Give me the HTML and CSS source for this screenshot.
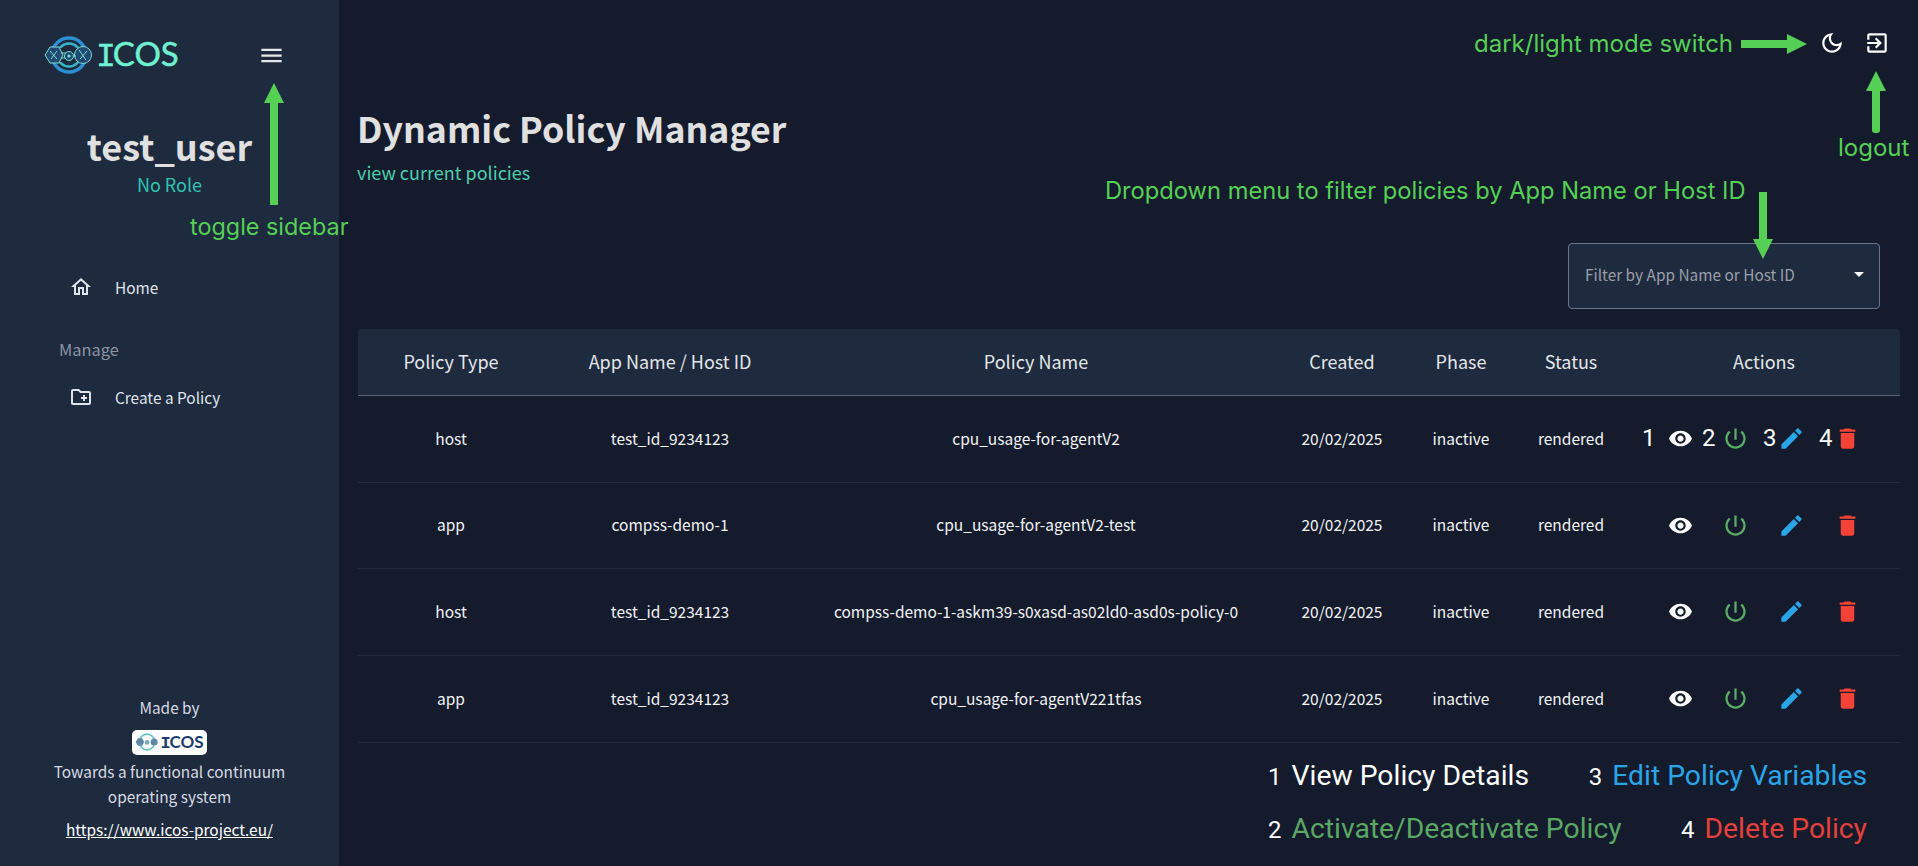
FILE: index.html
```html
<!DOCTYPE html>
<html lang="en">
<head>
<meta charset="utf-8">
<title>Dynamic Policy Manager</title>
<link rel="stylesheet" href="styles.css">
</head>
<body>
<div class="app">
  <aside class="sidebar">
    <div class="brand-row">
      <div class="brand">
        <svg class="brand-mark" viewBox="0 0 50 38" aria-hidden="true">
          <circle cx="25" cy="19" r="17" fill="none" stroke="#2b8fd0" stroke-width="3.5"/>
          <circle cx="25" cy="19" r="11.5" fill="none" stroke="#35b6c9" stroke-width="2.5"/>
          <rect x="3" y="12" width="44" height="14" rx="6" fill="#1e2a3e"/>
          <polygon points="1,19 6,11 15,11 19,19 15,27 6,27" fill="#1f4a72" stroke="#7fdcd5" stroke-width="1"/>
          <circle cx="25" cy="20" r="4.5" fill="#1f4a72" stroke="#7fdcd5" stroke-width="1"/>
          <circle cx="39" cy="19" r="8.5" fill="#1f4a72" stroke="#7fdcd5" stroke-width="1"/>
          <path d="M17 17h5M17 22h4M29 20h3M6 15l7 8M13 15l-6 8M35 14l7 10M43 15l-7 8" stroke="#7fdcd5" stroke-width="1" fill="none"/>
          <circle cx="25" cy="20" r="1.6" fill="#7fdcd5"/>
        </svg>
        <span class="brand-name"><span class="brand-i">I</span>COS</span>
      </div>
      <svg class="menu-icon" viewBox="0 0 24 24" aria-hidden="true"><path d="M3 18h18v-2H3v2zm0-5h18v-2H3v2zm0-7v2h18V6H3z"/></svg>
    </div>
    <div class="profile">
      <h2 class="profile-name">test_user</h2>
      <div class="profile-role">No Role</div>
    </div>
    <nav class="nav">
      <a class="nav-item">
        <svg class="nav-icon" viewBox="0 0 24 24" aria-hidden="true"><path d="M12 5.69l5 4.5V18h-2v-6H9v6H7v-7.81l5-4.5M12 3L2 12h3v8h6v-6h2v6h6v-8h3L12 3z"/></svg>
        <span>Home</span>
      </a>
      <div class="nav-heading">Manage</div>
      <a class="nav-item">
        <svg class="nav-icon" viewBox="0 0 24 24" aria-hidden="true"><path d="M20 6h-8l-2-2H4c-1.11 0-1.99.89-1.99 2L2 18c0 1.11.89 2 2 2h16c1.11 0 2-.89 2-2V8c0-1.11-.89-2-2-2zm0 12H4V6h5.17l2 2H20v10zm-8-4h2v2h2v-2h2v-2h-2v-2h-2v2h-2v2z"/></svg>
        <span>Create a Policy</span>
      </a>
    </nav>
    <footer class="side-foot">
      <div class="foot-line">Made by</div>
      <div class="chip">
        <svg class="chip-mark" viewBox="0 0 50 38" aria-hidden="true">
          <circle cx="25" cy="19" r="16.5" fill="none" stroke="#5fc3c8" stroke-width="3.5"/>
          <rect x="3" y="13" width="44" height="13" rx="6" fill="#fff"/>
          <polygon points="1,19 6,11 15,11 19,19 15,27 6,27" fill="#5f88a8"/>
          <circle cx="25" cy="20" r="5" fill="#7aa9bf"/>
          <circle cx="40" cy="19" r="7.5" fill="#5f88a8"/>
        </svg>
        <span class="chip-name"><span class="brand-i">I</span>COS</span>
      </div>
      <div class="foot-text">Towards a functional continuum<br>operating system</div>
      <a class="foot-link">https://www.icos-project.eu/</a>
    </footer>
  </aside>

  <main class="main">
    <div class="topbar">
      <svg class="top-icon" viewBox="0 0 24 24" aria-hidden="true"><path d="M9.37 5.51C9.19 6.15 9.1 6.82 9.1 7.5c0 4.08 3.32 7.4 7.4 7.4.68 0 1.35-.09 1.99-.27C17.45 17.19 14.93 19 12 19c-3.86 0-7-3.14-7-7 0-2.93 1.81-5.45 4.37-6.49zM12 3c-4.97 0-9 4.03-9 9s4.03 9 9 9 9-4.03 9-9c0-.46-.04-.92-.1-1.36-.98 1.37-2.58 2.26-4.4 2.26-2.98 0-5.4-2.42-5.4-5.4 0-1.81.89-3.42 2.26-4.4-.44-.06-.9-.1-1.36-.1z"/></svg>
      <svg class="top-icon" viewBox="0 0 24 24" aria-hidden="true"><path d="M10.09 15.59L11.5 17l5-5-5-5-1.41 1.41L12.67 11H3v2h9.67l-2.58 2.59zM19 3H5c-1.11 0-2 .9-2 2v4h2V5h14v14H5v-4H3v4c0 1.1.89 2 2 2h14c1.1 0 2-.9 2-2V5c0-1.1-.9-2-2-2z"/></svg>
    </div>
    <header class="page-head">
      <h1 class="page-title">Dynamic Policy Manager</h1>
      <div class="page-sub">view current policies</div>
    </header>
    <div class="filter-row">
      <div class="filter">
        <span class="filter-label">Filter by App Name or Host ID</span>
        <span class="filter-caret"></span>
      </div>
    </div>
    <table class="policy-table">
      <colgroup>
        <col class="c-type"><col class="c-app"><col class="c-name"><col class="c-date"><col class="c-phase"><col class="c-status"><col class="c-actions">
      </colgroup>
      <thead>
        <tr><th>Policy Type</th><th>App Name / Host ID</th><th>Policy Name</th><th>Created</th><th>Phase</th><th>Status</th><th>Actions</th></tr>
      </thead>
      <tbody>
        <tr>
          <td>host</td><td>test_id_9234123</td><td>cpu_usage-for-agentV2</td><td>20/02/2025</td><td>inactive</td><td>rendered</td>
          <td class="action-cell"><div class="actions">
            <svg class="act act-view" viewBox="0 0 24 24" aria-hidden="true"><path d="M12 4.5C7 4.5 2.73 7.61 1 12c1.73 4.39 6 7.5 11 7.5s9.27-3.11 11-7.5c-1.73-4.39-6-7.5-11-7.5zM12 17c-2.76 0-5-2.24-5-5s2.24-5 5-5 5 2.24 5 5-2.24 5-5 5zm0-8c-1.66 0-3 1.34-3 3s1.34 3 3 3 3-1.34 3-3-1.34-3-3-3z"/></svg>
            <svg class="act act-power" viewBox="0 0 24 24" aria-hidden="true"><path d="M13 3h-2v10h2V3zm4.83 2.17l-1.42 1.42C17.99 7.86 19 9.81 19 12c0 3.87-3.13 7-7 7s-7-3.13-7-7c0-2.19 1.01-4.14 2.58-5.42L6.17 5.17C4.23 6.82 3 9.26 3 12c0 4.97 4.03 9 9 9s9-4.03 9-9c0-2.74-1.23-5.18-3.17-6.83z"/></svg>
            <svg class="act act-edit" viewBox="0 0 24 24" aria-hidden="true"><path d="M3 17.25V21h3.75L17.81 9.94l-3.75-3.75L3 17.25zM20.71 7.04c.39-.39.39-1.02 0-1.41l-2.34-2.34c-.39-.39-1.02-.39-1.41 0l-1.83 1.83 3.75 3.75 1.83-1.83z"/></svg>
            <svg class="act act-del" viewBox="0 0 24 24" aria-hidden="true"><path d="M6 19c0 1.1.9 2 2 2h8c1.1 0 2-.9 2-2V7H6v12zM19 4h-3.5l-1-1h-5l-1 1H5v2h14V4z"/></svg>
            <span class="num num-1">1</span><span class="num num-2">2</span><span class="num num-3">3</span><span class="num num-4">4</span>
          </div></td>
        </tr>
        <tr>
          <td>app</td><td>compss-demo-1</td><td>cpu_usage-for-agentV2-test</td><td>20/02/2025</td><td>inactive</td><td>rendered</td>
          <td class="action-cell"><div class="actions">
            <svg class="act act-view" viewBox="0 0 24 24" aria-hidden="true"><path d="M12 4.5C7 4.5 2.73 7.61 1 12c1.73 4.39 6 7.5 11 7.5s9.27-3.11 11-7.5c-1.73-4.39-6-7.5-11-7.5zM12 17c-2.76 0-5-2.24-5-5s2.24-5 5-5 5 2.24 5 5-2.24 5-5 5zm0-8c-1.66 0-3 1.34-3 3s1.34 3 3 3 3-1.34 3-3-1.34-3-3-3z"/></svg>
            <svg class="act act-power" viewBox="0 0 24 24" aria-hidden="true"><path d="M13 3h-2v10h2V3zm4.83 2.17l-1.42 1.42C17.99 7.86 19 9.81 19 12c0 3.87-3.13 7-7 7s-7-3.13-7-7c0-2.19 1.01-4.14 2.58-5.42L6.17 5.17C4.23 6.82 3 9.26 3 12c0 4.97 4.03 9 9 9s9-4.03 9-9c0-2.74-1.23-5.18-3.17-6.83z"/></svg>
            <svg class="act act-edit" viewBox="0 0 24 24" aria-hidden="true"><path d="M3 17.25V21h3.75L17.81 9.94l-3.75-3.75L3 17.25zM20.71 7.04c.39-.39.39-1.02 0-1.41l-2.34-2.34c-.39-.39-1.02-.39-1.41 0l-1.83 1.83 3.75 3.75 1.83-1.83z"/></svg>
            <svg class="act act-del" viewBox="0 0 24 24" aria-hidden="true"><path d="M6 19c0 1.1.9 2 2 2h8c1.1 0 2-.9 2-2V7H6v12zM19 4h-3.5l-1-1h-5l-1 1H5v2h14V4z"/></svg>
          </div></td>
        </tr>
        <tr>
          <td>host</td><td>test_id_9234123</td><td>compss-demo-1-askm39-s0xasd-as02ld0-asd0s-policy-0</td><td>20/02/2025</td><td>inactive</td><td>rendered</td>
          <td class="action-cell"><div class="actions">
            <svg class="act act-view" viewBox="0 0 24 24" aria-hidden="true"><path d="M12 4.5C7 4.5 2.73 7.61 1 12c1.73 4.39 6 7.5 11 7.5s9.27-3.11 11-7.5c-1.73-4.39-6-7.5-11-7.5zM12 17c-2.76 0-5-2.24-5-5s2.24-5 5-5 5 2.24 5 5-2.24 5-5 5zm0-8c-1.66 0-3 1.34-3 3s1.34 3 3 3 3-1.34 3-3-1.34-3-3-3z"/></svg>
            <svg class="act act-power" viewBox="0 0 24 24" aria-hidden="true"><path d="M13 3h-2v10h2V3zm4.83 2.17l-1.42 1.42C17.99 7.86 19 9.81 19 12c0 3.87-3.13 7-7 7s-7-3.13-7-7c0-2.19 1.01-4.14 2.58-5.42L6.17 5.17C4.23 6.82 3 9.26 3 12c0 4.97 4.03 9 9 9s9-4.03 9-9c0-2.74-1.23-5.18-3.17-6.83z"/></svg>
            <svg class="act act-edit" viewBox="0 0 24 24" aria-hidden="true"><path d="M3 17.25V21h3.75L17.81 9.94l-3.75-3.75L3 17.25zM20.71 7.04c.39-.39.39-1.02 0-1.41l-2.34-2.34c-.39-.39-1.02-.39-1.41 0l-1.83 1.83 3.75 3.75 1.83-1.83z"/></svg>
            <svg class="act act-del" viewBox="0 0 24 24" aria-hidden="true"><path d="M6 19c0 1.1.9 2 2 2h8c1.1 0 2-.9 2-2V7H6v12zM19 4h-3.5l-1-1h-5l-1 1H5v2h14V4z"/></svg>
          </div></td>
        </tr>
        <tr>
          <td>app</td><td>test_id_9234123</td><td>cpu_usage-for-agentV221tfas</td><td>20/02/2025</td><td>inactive</td><td>rendered</td>
          <td class="action-cell"><div class="actions">
            <svg class="act act-view" viewBox="0 0 24 24" aria-hidden="true"><path d="M12 4.5C7 4.5 2.73 7.61 1 12c1.73 4.39 6 7.5 11 7.5s9.27-3.11 11-7.5c-1.73-4.39-6-7.5-11-7.5zM12 17c-2.76 0-5-2.24-5-5s2.24-5 5-5 5 2.24 5 5-2.24 5-5 5zm0-8c-1.66 0-3 1.34-3 3s1.34 3 3 3 3-1.34 3-3-1.34-3-3-3z"/></svg>
            <svg class="act act-power" viewBox="0 0 24 24" aria-hidden="true"><path d="M13 3h-2v10h2V3zm4.83 2.17l-1.42 1.42C17.99 7.86 19 9.81 19 12c0 3.87-3.13 7-7 7s-7-3.13-7-7c0-2.19 1.01-4.14 2.58-5.42L6.17 5.17C4.23 6.82 3 9.26 3 12c0 4.97 4.03 9 9 9s9-4.03 9-9c0-2.74-1.23-5.18-3.17-6.83z"/></svg>
            <svg class="act act-edit" viewBox="0 0 24 24" aria-hidden="true"><path d="M3 17.25V21h3.75L17.81 9.94l-3.75-3.75L3 17.25zM20.71 7.04c.39-.39.39-1.02 0-1.41l-2.34-2.34c-.39-.39-1.02-.39-1.41 0l-1.83 1.83 3.75 3.75 1.83-1.83z"/></svg>
            <svg class="act act-del" viewBox="0 0 24 24" aria-hidden="true"><path d="M6 19c0 1.1.9 2 2 2h8c1.1 0 2-.9 2-2V7H6v12zM19 4h-3.5l-1-1h-5l-1 1H5v2h14V4z"/></svg>
          </div></td>
        </tr>
      </tbody>
    </table>
    <div class="legend">
      <div class="legend-row">
        <div class="legend-item"><span class="legend-num">1</span><span class="leg-white">View Policy Details</span></div>
        <div class="legend-item"><span class="legend-num">3</span><span class="leg-blue">Edit Policy Variables</span></div>
      </div>
      <div class="legend-row">
        <div class="legend-item"><span class="legend-num">2</span><span class="leg-green">Activate/Deactivate Policy</span></div>
        <div class="legend-item"><span class="legend-num">4</span><span class="leg-red">Delete Policy</span></div>
      </div>
    </div>
  </main>
</div>

<span class="note note-toggle">toggle sidebar</span>
<span class="note note-mode">dark/light mode switch</span>
<span class="note note-logout">logout</span>
<span class="note note-filter">Dropdown menu to filter policies by App Name or Host ID</span>
<svg class="arrow arrow-toggle" viewBox="0 0 20 122" aria-hidden="true"><path d="M10 0L20 20H14V122H6V20H0z"/></svg>
<svg class="arrow arrow-mode" viewBox="0 0 66 20" aria-hidden="true"><path d="M66 10L46 20V14H0V6H46V0z"/></svg>
<svg class="arrow arrow-logout" viewBox="0 0 20 62" aria-hidden="true"><path d="M10 0L20 20H14V59a3 3 0 0 1-3 3H9a3 3 0 0 1-3-3V20H0z"/></svg>
<svg class="arrow arrow-filter" viewBox="0 0 20 67" aria-hidden="true"><path d="M10 67L0 47H6V0H14V47H20z"/></svg>
</body>
</html>
```
FILE: styles.css
```css
* { box-sizing: border-box; }
html, body { margin: 0; height: 866px; overflow: hidden; }
body {
  position: relative;
  background: #141b2d;
  color: #e0e0e0;
  font-family: "Noto Sans CJK SC", "Source Sans Pro", "Noto Sans", sans-serif;
}
.app { display: flex; height: 866px; }

/* Sidebar */
.sidebar {
  width: 339px;
  flex: none;
  background: #1e2a3e;
  display: flex;
  flex-direction: column;
}
.brand-row {
  display: flex;
  align-items: center;
  height: 54px;
  margin-top: 28px;
  padding-left: 44px;
}
.brand { display: flex; align-items: center; gap: 2px; width: 214px; }
.brand-mark { width: 50px; height: 38px; flex: none; }
.brand-name {
  font-family: "Lato", sans-serif;
  font-weight: 400;
  font-size: 33px;
  line-height: 1;
  color: #6ff0d0;
  -webkit-text-stroke: 0.5px #6ff0d0;
}
.brand-i { font-family: "Liberation Mono", monospace; letter-spacing: -3px; }
.menu-icon { width: 27px; height: 27px; fill: #e8e8e8; flex: none; }
.profile { text-align: center; margin-top: 35px; }
.profile-name {
  margin: 0;
  font-size: 36px;
  line-height: 56px;
  font-weight: 700;
  color: #e0e0e0;
}
.profile-role { font-size: 18px; line-height: 24px; color: #2fc4b2; margin-top: -1px; }
.nav { margin-top: 73px; padding-left: 59px; }
.nav-item {
  display: flex;
  align-items: center;
  gap: 22px;
  height: 36px;
  padding-left: 10px;
  font-size: 15.4px;
  color: #dfe3ea;
}
.nav-icon { width: 24px; height: 24px; fill: #dfe3ea; flex: none; }
.nav-heading { font-size: 16.4px; line-height: 24px; color: #8b93a1; margin: 32px 0 18px; }
.side-foot {
  margin-top: auto;
  padding-bottom: 25px;
  text-align: center;
  font-size: 15.4px;
  color: #d6dbe3;
}
.foot-line { line-height: 24px; }
.chip {
  display: inline-flex;
  align-items: center;
  justify-content: center;
  gap: 1px;
  width: 75px;
  height: 25px;
  margin-top: 11px;
  background: #fff;
  border-radius: 5px;
}
.chip-mark { width: 24px; height: 18px; flex: none; }
.chip-name {
  font-family: "Lato", sans-serif;
  font-weight: 700;
  font-size: 17px;
  line-height: 1;
  color: #1d3c6e;
}
.chip-name .brand-i { letter-spacing: -1px; }
.foot-text { line-height: 25px; margin-top: 4px; }
.foot-link {
  display: block;
  margin-top: 8px;
  line-height: 24px;
  color: #fff;
  text-decoration: underline;
}

/* Main */
.main { flex: 1; min-width: 0; padding: 0 18px 0 19px; display: flex; flex-direction: column; }
.topbar {
  display: flex;
  justify-content: flex-end;
  gap: 19px;
  padding: 30px 10px 0 0;
  height: 90px;
}
.top-icon { width: 26px; height: 26px; fill: #fff; }
.page-head { margin-top: 14px; margin-left: -1px; }
.page-title { margin: 0; font-size: 35.7px; line-height: 48px; font-weight: 700; color: #e0e0e0; }
.page-sub { font-size: 18px; line-height: 26px; color: #4cceac; margin-top: 7px; }
.filter-row { display: flex; justify-content: flex-end; padding-right: 20px; margin-top: 58px; }
.filter {
  width: 312px;
  height: 66px;
  display: flex;
  align-items: center;
  justify-content: space-between;
  padding: 0 15px 4px 16px;
  background: #1e2a3e;
  border: 1px solid #6d7584;
  border-radius: 4px;
}
.filter-label { font-size: 15.4px; color: #9b9fa7; }
.filter-caret {
  width: 0; height: 0;
  border-left: 5px solid transparent;
  border-right: 5px solid transparent;
  border-top: 5px solid #fff;
}
.policy-table {
  width: 1542px;
  margin-top: 20px;
  border-collapse: collapse;
  table-layout: fixed;
  text-align: center;
}
.c-type { width: 186px; }
.c-app { width: 252px; }
.c-name { width: 480px; }
.c-date { width: 132px; }
.c-phase { width: 106px; }
.c-status { width: 114px; }
.c-actions { width: 272px; }
.policy-table thead tr { height: 66px; background: #1e2a3e; border-bottom: 1px solid #5b6373; }
.policy-table th { font-weight: 400; font-size: 18px; color: #e3e6ea; padding: 0 0 2px; }
.policy-table th:first-child { border-top-left-radius: 4px; }
.policy-table th:last-child { border-top-right-radius: 4px; }
.policy-table tbody tr { height: 87px; border-bottom: 1px solid #242b3d; }
.policy-table tbody tr:nth-child(2) { height: 86px; }
.policy-table td { font-size: 15.5px; color: #f2f3f5; padding: 0 0 2px; }
.policy-table td.action-cell { padding: 0; }
.actions { position: relative; display: flex; justify-content: center; align-items: center; gap: 29px; padding-right: 1px; }
.act { width: 27px; height: 27px; flex: none; }
.act-view { fill: #fff; width: 25px; height: 25px; margin: 0 0 0 2px; }
.act-power { fill: #5cad65; }
.act-edit { fill: #2aa6e8; }
.act-del { fill: #f44336; }
.num {
  position: absolute;
  top: -3px;
  font-family: "Roboto", sans-serif;
  font-size: 24px;
  line-height: 32px;
  color: #fff;
}
.num-1 { left: 14px; }
.num-2 { left: 74px; }
.num-3 { left: 135px; }
.num-4 { left: 191px; }

/* Legend */
.legend { width: 599px; margin: 6px 0 0 910px; }
.legend-row { display: flex; justify-content: space-between; height: 53px; align-items: center; }
.legend-item {
  display: flex;
  align-items: baseline;
  gap: 10px;
  font-family: "Roboto", sans-serif;
  font-size: 28.3px;
  white-space: nowrap;
}
.legend-num { font-size: 24px; color: #fff; }
.leg-white { color: #fff; }
.leg-blue { color: #2aa6e8; }
.leg-green { color: #5aa863; }
.leg-red { color: #e5403a; }

/* Annotations drawn over the screenshot */
.note {
  position: absolute;
  font-family: "Inter", sans-serif;
  font-size: 24px;
  line-height: 30px;
  color: #55d055;
  white-space: nowrap;
}
.note-toggle { left: 190px; top: 212px; font-size: 23.4px; }
.note-mode { left: 1474px; top: 29px; }
.note-logout { left: 1838px; top: 133px; }
.note-filter { left: 1105px; top: 176px; font-size: 23.7px; }
.arrow { position: absolute; fill: #55d055; }
.arrow-toggle { left: 264px; top: 83px; width: 20px; height: 122px; }
.arrow-mode { left: 1741px; top: 34px; width: 66px; height: 20px; }
.arrow-logout { left: 1866px; top: 71px; width: 20px; height: 62px; }
.arrow-filter { left: 1753px; top: 192px; width: 20px; height: 67px; }
```
